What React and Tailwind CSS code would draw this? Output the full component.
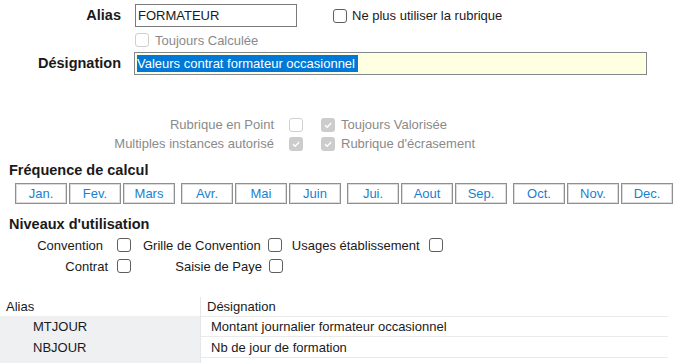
import React from "react";

// Small Windows-like checkbox
function Check({ checked = false, disabled = false }) {
  if (disabled && checked) {
    return (
      <span className="flex h-[14px] w-[14px] shrink-0 items-center justify-center rounded-[3px] bg-[#cccccc]">
        <svg width="10" height="10" viewBox="0 0 10 10">
          <path d="M2 5.2 L4.2 7.3 L8.2 3" fill="none" stroke="#ffffff" strokeWidth="1.3" />
        </svg>
      </span>
    );
  }
  return (
    <span
      className={
        disabled
          ? "block h-[14px] w-[14px] shrink-0 rounded-[3px] border border-[#cfcfcf] bg-white"
          : "block h-[14px] w-[14px] shrink-0 rounded-[3px] border border-[#5f5f5f] bg-white"
      }
    />
  );
}

const groups = [
  ["Jan.", "Fev.", "Mars"],
  ["Avr.", "Mai", "Juin"],
  ["Jui.", "Aout", "Sep."],
  ["Oct.", "Nov.", "Dec."],
];

export default function App() {
  return (
    <div
      className="relative h-[363px] w-[679px] overflow-hidden bg-white text-[13px] text-[#1a1a1a]"
      style={{ fontFamily: '"Liberation Sans", Arial, sans-serif' }}
    >
      {/* Alias */}
      <div className="mt-[4px] flex h-[23px] items-center">
        <div className="w-[121px] text-right text-[14.5px] font-bold leading-none">Alias</div>
        <div className="ml-[14px] flex h-[23px] w-[162px] items-center border border-[#7a7a7a] bg-white pl-[2px] leading-none">
          FORMATEUR
        </div>
        <div className="ml-[36px] flex items-center gap-[5px] leading-none">
          <Check />
          <span>Ne plus utiliser la rubrique</span>
        </div>
      </div>

      {/* Toujours Calculée */}
      <div className="ml-[135px] mt-[3px] flex h-[20px] items-center gap-[6px] leading-none text-[#8a8a8a]">
        <Check disabled />
        <span>Toujours Calculée</span>
      </div>

      {/* Désignation */}
      <div className="mt-[2px] flex h-[23px] items-center">
        <div className="w-[121px] text-right text-[14.5px] font-bold leading-none">Désignation</div>
        <div className="ml-[13px] flex h-[23px] w-[513px] items-center border border-[#828790] bg-[#ffffe1] pl-[2px] leading-none">
          <span className="bg-[#0078d7] py-[2px] pr-[3px] text-white">Valeurs contrat formateur occasionnel</span>
        </div>
      </div>

      {/* Options grisées */}
      <div className="mt-[40px] text-[#8a8a8a]">
        <div className="flex h-[19px] items-center leading-none">
          <span className="w-[274px] text-right">Rubrique en Point</span>
          <span className="ml-[15px]"><Check disabled /></span>
          <span className="ml-[18px]"><Check disabled checked /></span>
          <span className="ml-[6px]">Toujours Valorisée</span>
        </div>
        <div className="flex h-[19px] items-center leading-none">
          <span className="w-[274px] text-right">Multiples instances autorisé</span>
          <span className="ml-[15px]"><Check disabled checked /></span>
          <span className="ml-[18px]"><Check disabled checked /></span>
          <span className="ml-[6px]">Rubrique d'écrasement</span>
        </div>
      </div>

      {/* Fréquence de calcul */}
      <div className="ml-[9px] mt-[9px] h-[17px] text-[14.5px] font-bold leading-[17px]">Fréquence de calcul</div>
      <div className="ml-[15px] mt-[4px] flex gap-[6px]">
        {groups.map((g, i) => (
          <div key={i} className="flex gap-[2px]">
            {g.map((m) => (
              <div
                key={m}
                className="flex h-[21px] w-[52px] items-center justify-center border border-[#8f8f8f] bg-white leading-none text-[#1a7fcf] shadow-[inset_0_0_0_1px_#dcdcdc]"
              >
                {m}
              </div>
            ))}
          </div>
        ))}
      </div>

      {/* Niveaux d'utilisation */}
      <div className="ml-[9px] mt-[12px] h-[17px] text-[14.5px] font-bold leading-[17px]">Niveaux d'utilisation</div>
      <div className="mt-[2px] flex h-[20px] items-center leading-none">
        <span className="w-[103px] text-right">Convention</span>
        <span className="ml-[14px]"><Check /></span>
        <span className="ml-[12px]">Grille de Convention</span>
        <span className="ml-[7px]"><Check /></span>
        <span className="ml-[10px]">Usages établissement</span>
        <span className="ml-[9px]"><Check /></span>
      </div>
      <div className="mt-[1px] flex h-[20px] items-center leading-none">
        <span className="w-[108px] text-right">Contrat</span>
        <span className="ml-[9px]"><Check /></span>
        <span className="w-[131px] text-right">Saisie de Paye</span>
        <span className="ml-[7px]"><Check /></span>
      </div>

      {/* Table */}
      <div className="mt-[21px] flex">
        <div className="w-[200px] shrink-0">
          <div className="flex h-[19px] items-center pl-[6px] leading-none">Alias</div>
          <div className="h-[70px] bg-[#eef0f2]">
            <div className="flex h-[21px] items-center pl-[33px] leading-none">MTJOUR</div>
            <div className="flex h-[21px] items-center pl-[33px] leading-none">NBJOUR</div>
          </div>
        </div>
        <div className="w-[468px] border-l border-[#e6e6e6]">
          <div className="flex h-[19px] items-center pl-[6px] leading-none">Désignation</div>
          <div className="flex h-[21px] items-center border-t border-b border-[#eaeaea] pl-[10px] leading-none">
            Montant journalier formateur occasionnel
          </div>
          <div className="flex h-[21px] items-center border-b border-[#eaeaea] pl-[10px] leading-none">
            Nb de jour de formation
          </div>
        </div>
      </div>
    </div>
  );
}
